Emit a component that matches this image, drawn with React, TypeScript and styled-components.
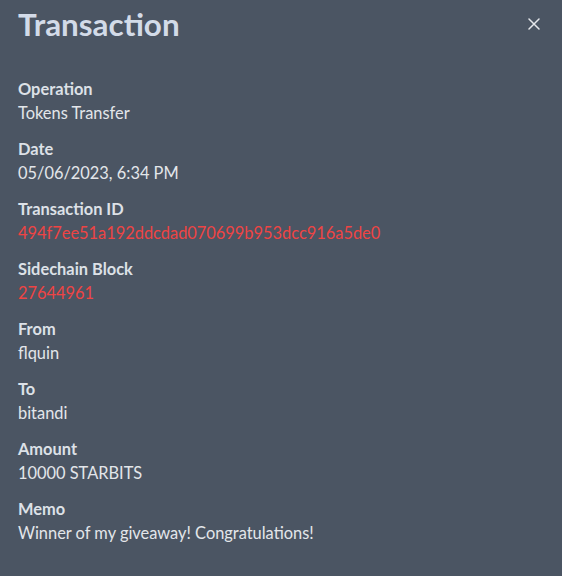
import styled, { createGlobalStyle } from "styled-components"

const GlobalStyle = createGlobalStyle`
    html, body {
        margin: 0;
        background: #4b5563;
    }
    body {
        font-family: "Lato", "Noto Sans", sans-serif;
    }
`

const Modal = styled.div`
    width: 562px;
    height: 576px;
    box-sizing: border-box;
    background: #4b5563;
    padding: 6px 18px 0 18px;
`
const Header = styled.div`
    display: flex;
    align-items: center;
    justify-content: space-between;
    height: 36px;
`
const Title = styled.h2`
    margin: 0;
    font-size: 31.4px;
    line-height: 36px;
    font-weight: 700;
    color: #d3dbe8;
`
const Close = styled.button`
    width: 24px;
    height: 24px;
    margin-right: -2px;
    padding: 0;
    border: none;
    background: transparent;
    display: flex;
    align-items: center;
    justify-content: center;
    cursor: pointer;
`
const List = styled.dl`
    margin: 35px 0 0 0;
    display: flex;
    flex-direction: column;
    gap: 12px;
`
const Item = styled.div`
    display: flex;
    flex-direction: column;
`
const Label = styled.dt`
    font-size: 16.4px;
    line-height: 24px;
    font-weight: 700;
    color: #dde1e7;
`
const Value = styled.dd<{ $accent?: boolean }>`
    margin: 0;
    font-size: 16.4px;
    line-height: 24px;
    color: ${props => props.$accent ? "#ef4444" : "#e3e6ea"};
`

const rows = [
    { label: "Operation", value: "Tokens Transfer" },
    { label: "Date", value: "05/06/2023, 6:34 PM" },
    { label: "Transaction ID", value: "494f7ee51a192ddcdad070699b953dcc916a5de0", accent: true },
    { label: "Sidechain Block", value: "27644961", accent: true },
    { label: "From", value: "flquin" },
    { label: "To", value: "bitandi" },
    { label: "Amount", value: "10000 STARBITS" },
    { label: "Memo", value: "Winner of my giveaway! Congratulations!" },
]

const App = () => {
    return (
        <>
            <GlobalStyle />
            <Modal>
                <Header>
                    <Title>Transaction</Title>
                    <Close aria-label="Close">
                        <svg width="12" height="12" viewBox="0 0 12 12" fill="none">
                            <path d="M1 1L11 11M11 1L1 11" stroke="#e5e7eb" strokeWidth="1.5" strokeLinecap="round" />
                        </svg>
                    </Close>
                </Header>
                <List>
                    {rows.map(r => (
                        <Item key={r.label}>
                            <Label>{r.label}</Label>
                            <Value $accent={r.accent}>{r.value}</Value>
                        </Item>
                    ))}
                </List>
            </Modal>
        </>
    )
}

export default App
